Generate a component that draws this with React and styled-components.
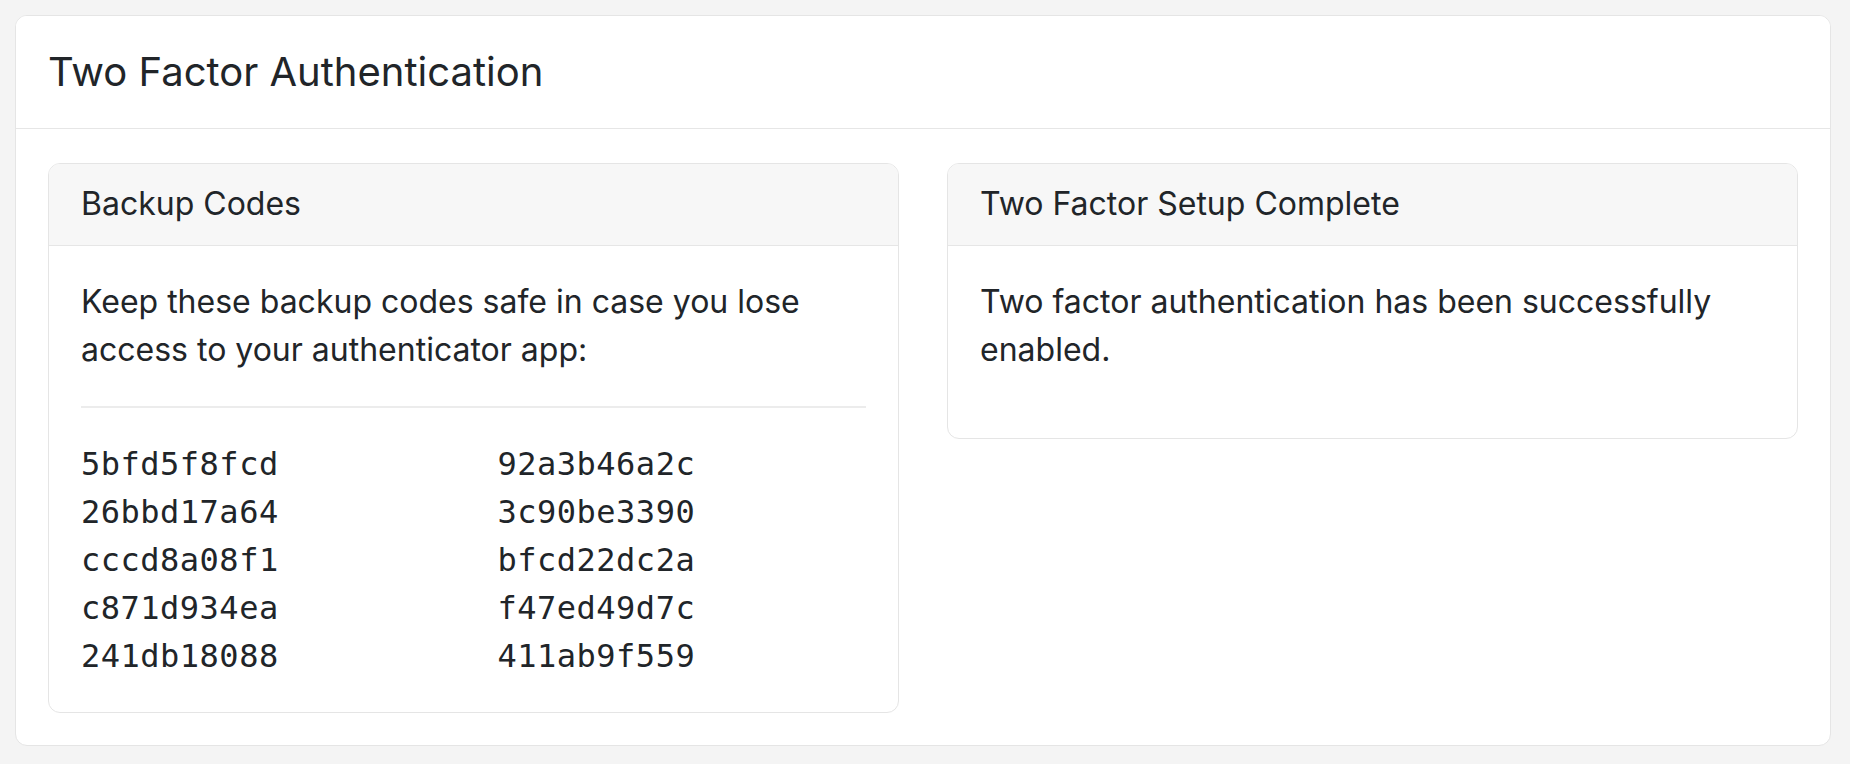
import React from "react"
import styled, { createGlobalStyle } from "styled-components"

const GlobalStyle = createGlobalStyle`
  body {
    margin: 0;
    background: #f4f4f4;
    color: #212529;
    font-family: Inter, "Noto Sans", sans-serif;
    font-size: 32px;
    line-height: 1.5;
  }
`

const Page = styled.div`
  padding: 15px 19px 17px 15px;
`

const Card = styled.div`
  background: #fff;
  border: 1px solid #e5e5e5;
  border-radius: 12px;
  overflow: hidden;
`

const CardHeader = styled.div`
  padding: ${(props) => (props.$large ? "32px" : "16px 32px 17px")};
  background: ${(props) => (props.$large ? "#fff" : "#f7f7f7")};
  border-bottom: 1px solid #e6e6e6;
`

const Title = styled.h3`
  margin: 0;
  font-size: 40px;
  font-weight: 400;
  line-height: 1.2;
`

const HeaderText = styled.div`
  font-size: 32px;
`

const CardBody = styled.div`
  padding: ${(props) => (props.$outer ? "34px 32px 32px" : "32px")};
`

const Columns = styled.div`
  display: grid;
  grid-template-columns: 1fr 1fr;
  column-gap: 48px;
  align-items: start;
`

const Text = styled.p`
  margin: 0 0 32px;
`

const Rule = styled.hr`
  margin: 32px 0;
  border: 0;
  border-top: 2px solid #ececec;
`

const CodeGrid = styled.div`
  display: grid;
  grid-template-columns: 1fr 1fr;
  column-gap: 48px;
`

const Code = styled.div`
  font-family: "DejaVu Sans Mono", "Liberation Mono", monospace;
  font-size: 32px;
  letter-spacing: 0.5px;
  line-height: 48px;
`

const codes = [
  "5bfd5f8fcd",
  "92a3b46a2c",
  "26bbd17a64",
  "3c90be3390",
  "cccd8a08f1",
  "bfcd22dc2a",
  "c871d934ea",
  "f47ed49d7c",
  "241db18088",
  "411ab9f559",
]

const App = () => {
  return (
    <Page>
      <GlobalStyle />
      <Card>
        <CardHeader $large>
          <Title>Two Factor Authentication</Title>
        </CardHeader>
        <CardBody $outer>
          <Columns>
            <Card>
              <CardHeader>
                <HeaderText>Backup Codes</HeaderText>
              </CardHeader>
              <CardBody>
                <Text>
                  Keep these backup codes safe in case you lose access to your
                  authenticator app:
                </Text>
                <Rule />
                <CodeGrid>
                  {codes.map((code) => (
                    <Code key={code}>{code}</Code>
                  ))}
                </CodeGrid>
              </CardBody>
            </Card>
            <Card>
              <CardHeader>
                <HeaderText>Two Factor Setup Complete</HeaderText>
              </CardHeader>
              <CardBody>
                <Text>
                  Two factor authentication has been successfully enabled.
                </Text>
              </CardBody>
            </Card>
          </Columns>
        </CardBody>
      </Card>
    </Page>
  )
}

export default App
